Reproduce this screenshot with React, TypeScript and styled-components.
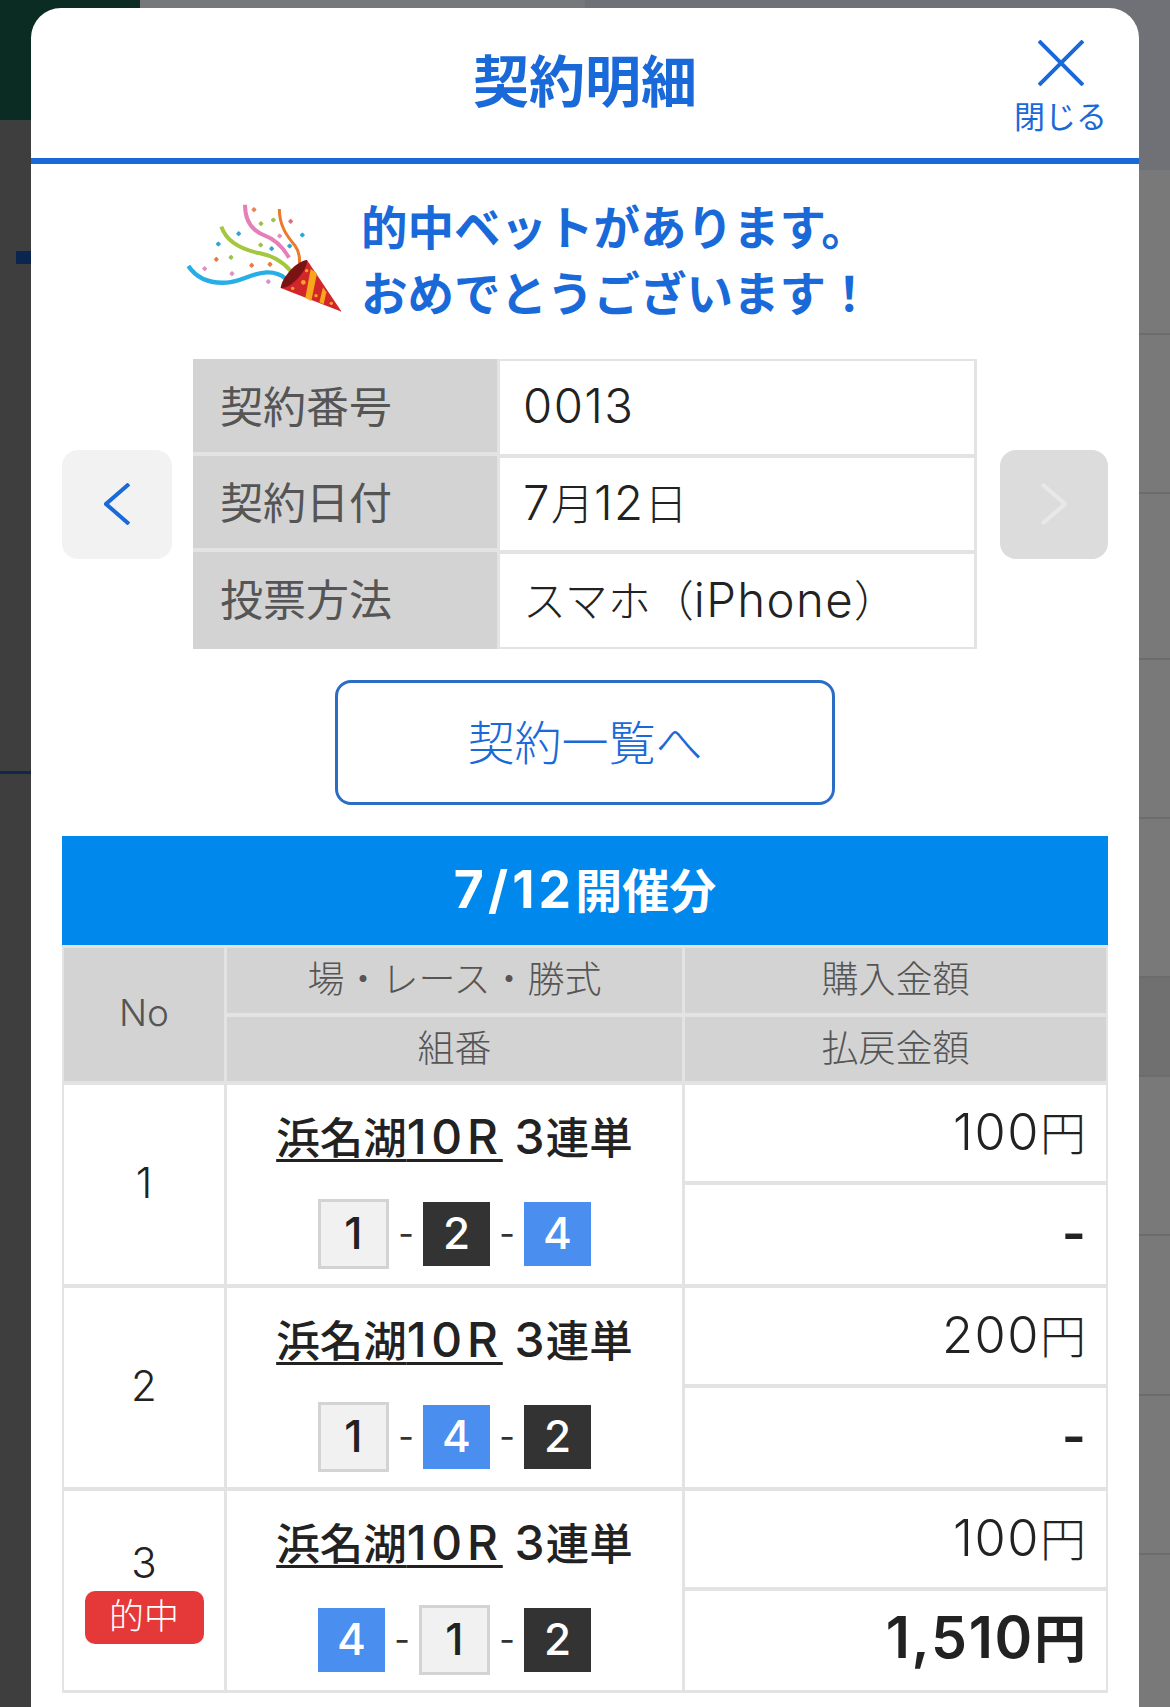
import React, { FunctionComponent } from 'react';
import styled, { createGlobalStyle } from 'styled-components';

const BLUE = '#1a69d9';
const CELL_LINE = '#e3e3e3';
const HEAD_BG = '#d3d3d3';

const GlobalStyle = createGlobalStyle`
  html, body {
    margin: 0;
    padding: 0;
    background: #3e3e3e;
  }
  body {
    font-family: Inter, "Noto Sans CJK JP", "Noto Sans", sans-serif;
    line-height: 1.4;
  }
  * {
    box-sizing: border-box;
  }
`;

const Page = styled.div`
  position: relative;
  width: 1170px;
  height: 1707px;
  overflow: hidden;
`;

const Backdrop = styled.div`
  display: flex;
  height: 100%;
`;

const BackdropLeft = styled.div`
  width: 585px;
  background: #3e3e3e;
`;

const BackdropTop = styled.div`
  display: flex;
  height: 120px;
`;

const BrandBlock = styled.div`
  width: 140px;
  background: #0a2c22;
`;

const TopStrip = styled.div`
  flex: 1;
  height: 8px;
  background: #77787c;
`;

const NavMark = styled.div`
  width: 15px;
  height: 13px;
  margin: 131px 0 0 16px;
  background: #0a2550;
`;

const NavLine = styled.div`
  height: 3px;
  margin-top: 507px;
  background: #10264a;
`;

const BackdropRight = styled.div`
  flex: 1;
  display: flex;
  flex-direction: column;
  background: #797979;
`;

const ListHead = styled.div`
  height: 170px;
  background: #6f7176;
`;

const ListRow = styled.div<{ $height: number; $dark?: boolean }>`
  height: ${p => p.$height}px;
  border-bottom: 2px solid #6c6c6c;
  background: ${p => (p.$dark ? '#707070' : 'transparent')};
`;

const Overlay = styled.div`
  position: absolute;
  inset: 0;
  padding: 8px 31px 0;
`;

const Modal = styled.div`
  height: 100%;
  background: #fff;
  border-radius: 30px 30px 0 0;
`;

const Header = styled.header`
  display: grid;
  grid-template-columns: 1fr auto 1fr;
  align-items: center;
  height: 156px;
  padding: 0 32px;
  border-bottom: 6px solid ${BLUE};
`;

const Title = styled.h1`
  grid-column: 2;
  margin: 0 0 1px;
  font-size: 56px;
  line-height: 1.2;
  font-weight: 700;
  color: ${BLUE};
`;

const CloseButton = styled.button`
  grid-column: 3;
  justify-self: end;
  display: flex;
  flex-direction: column;
  align-items: center;
  gap: 13px;
  margin-top: 8px;
  padding: 0;
  border: 0;
  background: none;
  font-family: inherit;
  font-size: 31px;
  line-height: 36px;
  font-weight: 400;
  color: ${BLUE};
`;

const Congrats = styled.section`
  display: flex;
  align-items: center;
  gap: 17px;
  height: 195px;
  padding: 0 0 7px 153px;
`;

const CongratsText = styled.p`
  margin: 5px 0 0;
  font-size: 46.5px;
  line-height: 66px;
  font-weight: 700;
  color: ${BLUE};
  white-space: nowrap;
`;

const DetailRow = styled.section`
  display: flex;
  align-items: center;
  justify-content: space-between;
  padding: 0 31px;
`;

const ArrowButton = styled.button<{ $disabled?: boolean }>`
  display: flex;
  align-items: center;
  justify-content: center;
  width: ${p => (p.$disabled ? 108 : 110)}px;
  height: 109px;
  padding: 0;
  border: 0;
  border-radius: 16px;
  background: ${p => (p.$disabled ? '#dcdcdc' : '#f2f2f2')};
  color: ${p => (p.$disabled ? '#e8e8e8' : BLUE)};
`;

const InfoTable = styled.div`
  display: grid;
  grid-template-columns: 304px 480px;
  width: 784px;
  height: 290px;
  margin-left: -2px;
  grid-auto-rows: 1fr;
`;

const InfoHead = styled.div`
  display: flex;
  align-items: center;
  padding: 3px 0 0 27px;
  background: ${HEAD_BG};
  border-bottom: 4px solid ${CELL_LINE};
  font-size: 43px;
  color: #555;

  &:nth-last-child(2) {
    border-bottom-color: ${HEAD_BG};
  }
`;

const InfoValue = styled.div`
  display: flex;
  align-items: center;
  padding-left: 23px;
  border: 3px solid ${CELL_LINE};
  border-bottom-width: 2px;
  border-top-width: 2px;
  font-size: 43px;
  font-weight: 300;
  color: #222;
`;

const ListLink = styled.button`
  display: block;
  width: 500px;
  height: 125px;
  margin: 31px auto;
  padding: 0;
  border: 3px solid #2b6cc4;
  border-radius: 16px;
  background: #fff;
  font-family: inherit;
  font-size: 47px;
  line-height: 1.4;
  font-weight: 300;
  color: ${BLUE};
`;

const Section = styled.section`
  padding: 0 31px;
`;

// latin runs sit a little larger and wider than the kanji around them
const Num = styled.span`
  font-size: 1.1em;
  line-height: 1;
  letter-spacing: 0.03em;
`;

const Band = styled.h2`
  display: flex;
  align-items: center;
  justify-content: center;
  height: 109px;
  margin: 0;
  background: #0088ec;
  font-size: 47px;
  font-weight: 700;
  color: #fff;

  ${Num} {
    letter-spacing: 0.08em;
  }
`;

const BetGrid = styled.div`
  display: grid;
  grid-template-columns: 160px 455px 421px;
  column-gap: 3px;
  row-gap: 4px;
  padding: 3px 2px;
  background: ${CELL_LINE};
`;

const HeadCell = styled.div<{ $span?: boolean }>`
  grid-row: ${p => (p.$span ? 'span 2' : 'auto')};
  display: flex;
  align-items: center;
  justify-content: center;
  min-height: 64.5px;
  padding-bottom: ${p => (p.$span ? 4 : 0)}px;
  background: ${HEAD_BG};
  font-size: 37px;
  font-weight: 300;
  color: #555;
`;

const NoCell = styled.div`
  grid-row: span 2;
  display: flex;
  flex-direction: column;
  align-items: center;
  justify-content: center;
  padding-bottom: 4px;
  background: #fff;
  font-size: 42px;
  line-height: 57px;
  font-weight: 300;
  color: #222;
`;

const HitBadge = styled.span`
  width: 119px;
  height: 53px;
  border-radius: 10px;
  background: #e53939;
  font-size: 35px;
  line-height: 50px;
  font-weight: 300;
  text-align: center;
  color: #fff;
`;

const RaceCell = styled.div`
  grid-row: span 2;
  display: flex;
  flex-direction: column;
  align-items: center;
  padding-top: 23px;
  background: #fff;
`;

const RaceName = styled.div`
  height: 60px;
  font-size: 43.5px;
  line-height: 60px;
  font-weight: 500;
  color: #222;
  white-space: nowrap;

  u {
    text-underline-offset: 5px;
    text-decoration-thickness: 3px;
  }

  u ${Num} {
    letter-spacing: 0.1em;
  }
`;

const Boats = styled.div`
  display: flex;
  align-items: center;
  height: 70px;
  margin-top: 31px;
`;

const Boat = styled.span<{ $kind: 'white' | 'black' | 'blue' }>`
  display: flex;
  align-items: center;
  justify-content: center;
  width: ${p => (p.$kind === 'white' ? 71 : 67)}px;
  height: ${p => (p.$kind === 'white' ? 70 : 64)}px;
  border: ${p => (p.$kind === 'white' ? `3px solid ${HEAD_BG}` : '0')};
  background: ${p => ({ white: '#f1f1f1', black: '#333', blue: '#4a8ef0' })[p.$kind]};
  font-size: 44px;
  font-weight: 500;
  color: ${p => (p.$kind === 'white' ? '#222' : '#fff')};
`;

const Dash = styled.span`
  width: 34px;
  font-size: 34px;
  font-weight: 400;
  text-align: center;
  color: #333;
`;

const MoneyCell = styled.div<{ $height: number; $strong?: boolean }>`
  display: flex;
  align-items: center;
  justify-content: flex-end;
  height: ${p => p.$height}px;
  padding-right: 20px;
  background: #fff;
  font-size: ${p => (p.$strong ? 52 : 46)}px;
  font-weight: ${p => (p.$strong ? 600 : 300)};
  color: #222;
`;

const ConfettiSvg = styled.svg`
  flex: none;
  width: 160px;
  height: 110px;
`;

const CONFETTI: [number, number, string][] = [
  [282, 62, '#e8825a'],
  [303, 104, '#9cc24a'],
  [340, 93, '#9cc24a'],
  [392, 97, '#e0707f'],
  [236, 134, '#2aa7d8'],
  [175, 165, '#2aa7d8'],
  [302, 168, '#9cc24a'],
  [359, 141, '#e08fc0'],
  [335, 179, '#2aa7d8'],
  [389, 171, '#2aa7d8'],
  [427, 138, '#2aa7d8'],
  [169, 211, '#ec7a3c'],
  [213, 205, '#9cc24a'],
  [134, 239, '#e08fc0'],
  [216, 254, '#e08fc0'],
  [275, 229, '#ec7a3c'],
  [330, 226, '#ec7a3c'],
  [325, 278, '#e08fc0'],
];

const Confetti: FunctionComponent = () => (
  <ConfettiSvg viewBox="72 42 480 330" fill="none" strokeLinecap="butt">
    <path d="M85 231C110 268 150 284 200 281C245 278 275 252 320 250C345 249 362 256 376 268" stroke="#27aee6" strokeWidth="13" />
    <path d="M255 47C255 95 275 125 315 140C350 153 372 180 387 206" stroke="#e67fb8" strokeWidth="12" />
    <path d="M184 113C200 160 245 182 300 193C350 203 375 225 392 246" stroke="#a5c63f" strokeWidth="12" />
    <path d="M358 60C358 110 380 140 405 170C418 188 420 205 418 224" stroke="#ec7a2c" strokeWidth="9" />
    {CONFETTI.map(([x, y, color]) => (
      <rect key={`${x}-${y}`} x={x - 6} y={y - 6} width="12" height="12" rx="3" fill={color} transform={`rotate(45 ${x} ${y})`} />
    ))}
    <path d="M441 213L545 368L362 297Z" fill="#d3262b" />
    <path d="M441 213C445 240 395 300 362 297C365 265 410 215 441 213Z" fill="#7a1414" />
    <path d="M452 240L471 253L454 336L436 327Z" fill="#f6a71c" />
    <path d="M489 295L499 310L491 346L478 340Z" fill="#f6a71c" />
    <circle cx="430" cy="280" r="7" fill="#f6a71c" />
    <circle cx="398" cy="298" r="5" fill="#f6a71c" />
    <circle cx="440" cy="245" r="5" fill="#f6a71c" />
    <circle cx="468" cy="320" r="5" fill="#f6a71c" />
    <circle cx="514" cy="343" r="5" fill="#f6a71c" />
  </ConfettiSvg>
);

const Mixed: FunctionComponent<{ text: string }> = ({ text }) => (
  <>
    {text.split(/([0-9A-Za-z,/]+)/).map((part, i) => (i % 2 ? <Num key={i}>{part}</Num> : part))}
  </>
);

const INFO = [
  ['契約番号', '0013'],
  ['契約日付', '7月12日'],
  ['投票方法', 'スマホ（iPhone）'],
];

type BoatKind = 'white' | 'black' | 'blue';

const BOAT_KIND: Record<number, BoatKind> = { 1: 'white', 2: 'black', 4: 'blue' };

const BETS = [
  { no: 1, boats: [1, 2, 4], amount: '100円', paid: '-' },
  { no: 2, boats: [1, 4, 2], amount: '200円', paid: '-' },
  { no: 3, boats: [4, 1, 2], amount: '100円', paid: '1,510円', hit: true },
];

const BACK_ROWS = [165, 159, 166, 159, 159, 99, 159, 160, 159];

const App: FunctionComponent = () => {
  return (
    <Page>
      <GlobalStyle />
      <Backdrop>
        <BackdropLeft>
          <BackdropTop>
            <BrandBlock />
            <TopStrip />
          </BackdropTop>
          <NavMark />
          <NavLine />
        </BackdropLeft>
        <BackdropRight>
          <ListHead />
          {BACK_ROWS.map((height, i) => (
            <ListRow key={i} $height={height} $dark={i === 5} />
          ))}
        </BackdropRight>
      </Backdrop>
      <Overlay>
        <Modal>
          <Header>
            <Title>契約明細</Title>
            <CloseButton>
              <svg width="46" height="46" viewBox="0 0 46 46" fill="none" stroke={BLUE} strokeWidth="4">
                <path d="M1 1L45 45M45 1L1 45" />
              </svg>
              閉じる
            </CloseButton>
          </Header>
          <Congrats>
            <Confetti />
            <CongratsText>
              的中ベットがあります。
              <br />
              おめでとうございます！
            </CongratsText>
          </Congrats>
          <DetailRow>
            <ArrowButton>
              <svg width="26" height="42" viewBox="0 0 26 42" fill="none" stroke="currentColor" strokeWidth="4">
                <path d="M25 1L2 21L25 41" />
              </svg>
            </ArrowButton>
            <InfoTable>
              {INFO.map(([label, value]) => (
                <React.Fragment key={label}>
                  <InfoHead>{label}</InfoHead>
                  <InfoValue>
                    <span>
                      <Mixed text={value} />
                    </span>
                  </InfoValue>
                </React.Fragment>
              ))}
            </InfoTable>
            <ArrowButton $disabled>
              <svg width="26" height="42" viewBox="0 0 26 42" fill="none" stroke="currentColor" strokeWidth="4">
                <path d="M1 1L24 21L1 41" />
              </svg>
            </ArrowButton>
          </DetailRow>
          <ListLink>契約一覧へ</ListLink>
          <Section>
            <Band>
              <span>
                <Mixed text="7/12開催分" />
              </span>
            </Band>
            <BetGrid>
              <HeadCell $span>No</HeadCell>
              <HeadCell>場・レース・勝式</HeadCell>
              <HeadCell>購入金額</HeadCell>
              <HeadCell>組番</HeadCell>
              <HeadCell>払戻金額</HeadCell>
              {BETS.map(bet => (
                <React.Fragment key={bet.no}>
                  <NoCell>
                    {bet.no}
                    {bet.hit && <HitBadge>的中</HitBadge>}
                  </NoCell>
                  <RaceCell>
                    <RaceName>
                      <u>
                        <Mixed text="浜名湖10R" />
                      </u>{' '}
                      <Mixed text="3連単" />
                    </RaceName>
                    <Boats>
                      {bet.boats.map((boat, i) => (
                        <React.Fragment key={boat}>
                          {i > 0 && <Dash>-</Dash>}
                          <Boat $kind={BOAT_KIND[boat]}>{boat}</Boat>
                        </React.Fragment>
                      ))}
                    </Boats>
                  </RaceCell>
                  <MoneyCell $height={96}>
                    <span>
                      <Mixed text={bet.amount} />
                    </span>
                  </MoneyCell>
                  <MoneyCell $height={99} $strong>
                    <span>
                      <Mixed text={bet.paid} />
                    </span>
                  </MoneyCell>
                </React.Fragment>
              ))}
            </BetGrid>
          </Section>
        </Modal>
      </Overlay>
    </Page>
  );
};

export default App;
